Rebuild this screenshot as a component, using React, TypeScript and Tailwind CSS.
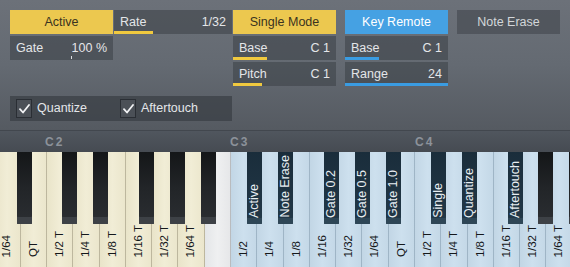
import React from 'react'

const C2_X = 47

type Tone = 'cream' | 'plain' | 'blue'

const WHITE_KEYS: { label: string; tone: Tone }[] = [
  { label: '1/64', tone: 'cream' },
  { label: 'QT', tone: 'cream' },
  { label: '1/2 T', tone: 'cream' },
  { label: '1/4 T', tone: 'cream' },
  { label: '1/8 T', tone: 'cream' },
  { label: '1/16 T', tone: 'cream' },
  { label: '1/32 T', tone: 'cream' },
  { label: '1/64 T', tone: 'cream' },
  { label: '', tone: 'plain' },
  { label: '1/2', tone: 'blue' },
  { label: '1/4', tone: 'blue' },
  { label: '1/8', tone: 'blue' },
  { label: '1/16', tone: 'blue' },
  { label: '1/32', tone: 'blue' },
  { label: '1/64', tone: 'blue' },
  { label: 'QT', tone: 'blue' },
  { label: '1/2 T', tone: 'blue' },
  { label: '1/4 T', tone: 'blue' },
  { label: '1/8 T', tone: 'blue' },
  { label: '1/16 T', tone: 'blue' },
  { label: '1/32 T', tone: 'blue' },
  { label: '1/64 T', tone: 'blue' },
]

// octave index relative to C2, offset inside octave, label
const BLACK_KEYS: { oct: number; off: number; label?: string }[] = [
  { oct: -1, off: 154 },
  { oct: 0, off: 15 },
  { oct: 0, off: 46 },
  { oct: 0, off: 92 },
  { oct: 0, off: 123 },
  { oct: 0, off: 154 },
  { oct: 1, off: 15.5, label: 'Active' },
  { oct: 1, off: 46.5, label: 'Note Erase' },
  { oct: 1, off: 92.5, label: 'Gate 0.2' },
  { oct: 1, off: 123.5, label: 'Gate 0.5' },
  { oct: 1, off: 154.5, label: 'Gate 1.0' },
  { oct: 2, off: 16, label: 'Single' },
  { oct: 2, off: 46.5, label: 'Quantize' },
  { oct: 2, off: 92.5, label: 'Aftertouch' },
  { oct: 2, off: 123 },
  { oct: 2, off: 154 },
]

const toneClass: Record<Tone, string> = {
  cream: 'bg-gradient-to-r from-[#e9e4c9] via-[#f1edd6] to-[#ebe6cc] border-[#bdb79e]',
  plain: 'bg-gradient-to-r from-[#e4e6e8] via-[#eff0f1] to-[#e6e7e9] border-[#b9bbbe]',
  blue: 'bg-gradient-to-r from-[#c2d6e5] via-[#cde0ee] to-[#c4d8e7] border-[#9fb5c6]',
}

function Slider({ label, value, bar, color, className = '' }: { label: string; value: string; bar: string; color: string; className?: string }) {
  return (
    <div className={`relative h-6 flex items-center justify-between px-[6px] bg-[#3a3f46]/55 text-[#e4e6e9] text-[12.5px] ${className}`}>
      <span>{label}</span>
      <span>{value}</span>
      <div className={`absolute left-0 bottom-0 h-[3px] ${bar} ${color}`} />
    </div>
  )
}

function Check({ label }: { label: string }) {
  return (
    <div className="flex items-center gap-[5px]">
      <div className="w-4 h-[19px] border border-[#2a2e34] bg-[#4b5057] flex items-center justify-center">
        <svg width="11" height="10" viewBox="0 0 11 10" fill="none">
          <path d="M1 5.2 L4 8.5 L10 1" stroke="#f2f3f5" strokeWidth="1.8" strokeLinecap="round" strokeLinejoin="round" />
        </svg>
      </div>
      <span className="text-[#e4e6e9] text-[12.5px]">{label}</span>
    </div>
  )
}

export default function App() {
  return (
    <div className="w-[570px] h-[267px] overflow-hidden bg-[#2e3237] font-['Liberation_Sans',Arial,sans-serif]">
      {/* Control panel */}
      <div className="h-[130px] bg-gradient-to-b from-[#6c7179] via-[#646a72] to-[#555a61] pt-[10px] px-[10px] flex gap-[1px]">
        <div className="w-[222px] flex flex-col">
          <div className="flex gap-[1px]">
            <div className="w-[103px] h-6 bg-[#ecc84f] text-[#3a3320] text-[12.5px] flex items-center justify-center">Active</div>
            <Slider label="Rate" value="1/32" bar="w-[39px]" color="bg-[#f0c93f]" className="flex-1" />
          </div>
          <div className="relative w-[103px] h-6 mt-[2px] flex items-center justify-between px-[6px] bg-[#3a3f46]/55 text-[#e4e6e9] text-[12.5px]">
            <span>Gate</span>
            <span>100 %</span>
            <div className="absolute left-[61px] bottom-[1px] w-[1px] h-[3px] bg-[#d9dbde]" />
          </div>
          <div className="mt-[36px] h-[25px] bg-[#353a41]/65 flex items-center pl-[6px] gap-[23px]">
            <div className="w-[81px]"><Check label="Quantize" /></div>
            <Check label="Aftertouch" />
          </div>
        </div>

        <div className="w-[103px] flex flex-col gap-[2px]">
          <div className="h-6 bg-[#ecc84f] text-[#3a3320] text-[12.5px] flex items-center justify-center">Single Mode</div>
          <Slider label="Base" value="C 1" bar="w-[34px]" color="bg-[#f0c93f]" />
          <Slider label="Pitch" value="C 1" bar="w-[29px]" color="bg-[#f0c93f]" />
        </div>

        <div className="w-[103px] ml-[8px] flex flex-col gap-[2px]">
          <div className="h-6 bg-[#45a1e3] text-white text-[12.5px] flex items-center justify-center">Key Remote</div>
          <Slider label="Base" value="C 1" bar="w-[34px]" color="bg-[#3a9ce2]" />
          <Slider label="Range" value="24" bar="w-full" color="bg-[#3a9ce2]" />
        </div>

        <div className="w-[103px] ml-[8px] flex flex-col">
          <div className="h-6 bg-[#474c53]/70 text-[#d3d6da] text-[12.5px] flex items-center justify-center">Note Erase</div>
        </div>
      </div>

      {/* Octave header */}
      <div className="h-[22px] border-t border-[#42474e] bg-gradient-to-b from-[#50565e] to-[#464b52] flex items-center pl-[45px] text-[12px] font-bold text-[#8c929a] tracking-[2px]">
        <span className="w-[185px]">C2</span>
        <span className="w-[185px]">C3</span>
        <span>C4</span>
      </div>

      {/* Keyboard */}
      <div className="relative h-[115px] overflow-hidden">
        <div className="flex h-full ml-[-5.57px]">
          {WHITE_KEYS.map((k, i) => (
            <div key={i} className={`shrink-0 w-[26.286px] h-full border-r flex flex-col justify-end items-center pb-[10px] ${toneClass[k.tone]}`}>
              <span className="[writing-mode:vertical-rl] rotate-180 text-[11.5px] text-[#15181b] whitespace-nowrap">{k.label}</span>
            </div>
          ))}
        </div>
        {BLACK_KEYS.map((b, i) => (
          <div
            key={i}
            className={`absolute top-0 w-[15px] h-[72px] flex flex-col justify-end items-center pb-[6px] rounded-b-[1px] ${
              b.label
                ? 'bg-gradient-to-b from-[#1a2d3b] to-[#223848] shadow-[inset_0_-6px_0_#2e4656]'
                : 'bg-gradient-to-b from-[#141618] via-[#222528] to-[#2b2e32] shadow-[inset_0_-7px_0_#3d4146]'
            }`}
            style={{ left: C2_X + b.oct * 184 + b.off }}
          >
            {b.label && (
              <span className="[writing-mode:vertical-rl] rotate-180 text-[12.5px] text-[#e8eef3] whitespace-nowrap">{b.label}</span>
            )}
          </div>
        ))}
      </div>
    </div>
  )
}
